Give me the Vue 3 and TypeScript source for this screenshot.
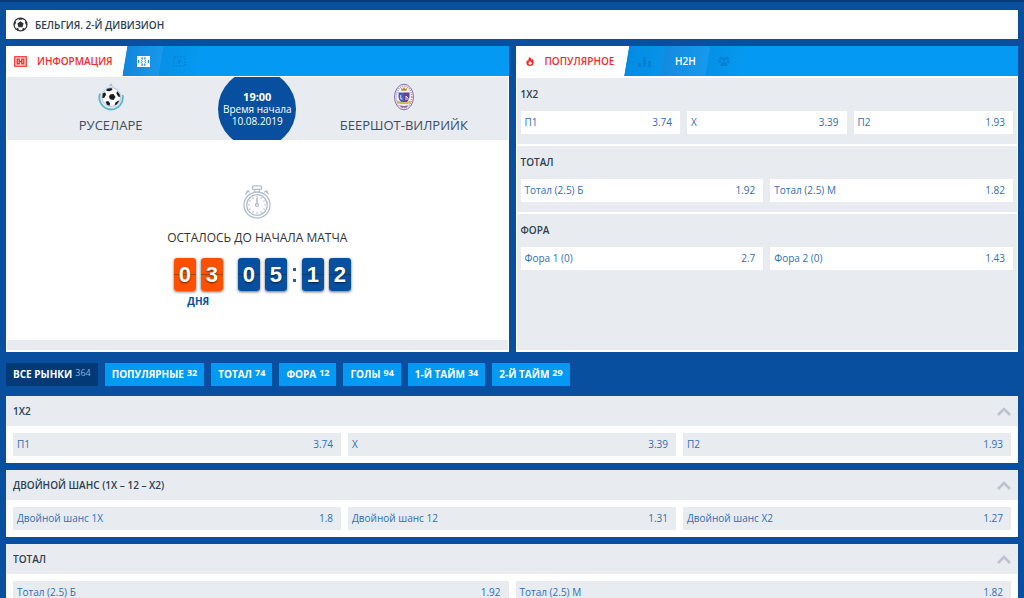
<script setup lang="ts">
import { ref } from 'vue'

interface Outcome {
  name: string
  odds: string
}

interface Market {
  title: string
  outcomes: Outcome[]
}

interface Filter {
  name: string
  count: number
}

const result: Market = {
  title: '1X2',
  outcomes: [
    { name: 'П1', odds: '3.74' },
    { name: 'X', odds: '3.39' },
    { name: 'П2', odds: '1.93' },
  ],
}

const total: Market = {
  title: 'ТОТАЛ',
  outcomes: [
    { name: 'Тотал (2.5) Б', odds: '1.92' },
    { name: 'Тотал (2.5) М', odds: '1.82' },
  ],
}

const handicap: Market = {
  title: 'ФОРА',
  outcomes: [
    { name: 'Фора 1 (0)', odds: '2.7' },
    { name: 'Фора 2 (0)', odds: '1.43' },
  ],
}

const doubleChance: Market = {
  title: 'ДВОЙНОЙ ШАНС (1X – 12 – X2)',
  outcomes: [
    { name: 'Двойной шанс 1X', odds: '1.8' },
    { name: 'Двойной шанс 12', odds: '1.31' },
    { name: 'Двойной шанс X2', odds: '1.27' },
  ],
}

const popular: Market[] = [result, total, handicap]
const markets: Market[] = [result, doubleChance, total]

const filters: Filter[] = [
  { name: 'ВСЕ РЫНКИ', count: 364 },
  { name: 'ПОПУЛЯРНЫЕ', count: 32 },
  { name: 'ТОТАЛ', count: 74 },
  { name: 'ФОРА', count: 12 },
  { name: 'ГОЛЫ', count: 94 },
  { name: '1-Й ТАЙМ', count: 34 },
  { name: '2-Й ТАЙМ', count: 29 },
]

const activeFilter = ref(0)
const closed = ref<Set<number>>(new Set())

function toggle(index: number): void {
  const next = new Set(closed.value)
  if (!next.delete(index)) next.add(index)
  closed.value = next
}

const ticks = Array.from({ length: 12 }, (_, i) => i * 30)
</script>

<template>
  <div class="page">
    <header class="league">
      <svg class="league-ball" viewBox="0 0 16 16" aria-hidden="true">
        <circle cx="8" cy="8" r="6.9" fill="#fff" stroke="#2f2f33" stroke-width="1.3" />
        <path d="M8 4.6l3.300 2.400-1.200 3.900H5.900L4.700 7z" fill="#2f2f33" />
        <path d="M5 1.700Q8 .6 11 1.700L9.500 3H6.500zM1.200 6.200L3.300 4.600 2.800 7.500 1.300 9zM14.800 6.200L12.700 4.600l.5 2.900L14.700 9zM3.600 11.500l2.100.6.700 2.200-2-.5zM12.400 11.500l-2.100.6-.7 2.200 2-.5z" fill="#2f2f33" />
      </svg>
      <h1>БЕЛЬГИЯ. 2-Й ДИВИЗИОН</h1>
    </header>

    <div class="panels">
      <section class="panel">
        <nav class="tabs">
          <button type="button" class="tab tab-active">
            <svg class="icon-field" viewBox="0 0 13 11" aria-hidden="true">
              <rect x=".75" y=".75" width="11.500" height="9.500" fill="#fde3e3" stroke="currentColor" stroke-width="1.200" />
              <path d="M3.200 3.200h2v4.600h-2zM7.800 3.200h2v4.600h-2zM5.500 5.500h2" fill="none" stroke="currentColor" stroke-width="1.300" />
            </svg>
            <span>ИНФОРМАЦИЯ</span>
          </button>
          <button type="button" class="tab tab-second" aria-label="Поле">
            <svg class="icon-field" viewBox="0 0 13 11" aria-hidden="true">
              <rect width="13" height="11" rx=".5" fill="#fff" />
              <path d="M4.500 1.200h1.300v2.300H4.500zM7.200 1.200h1.300v2.300H7.200zM4.500 7.500h1.300v2.300H4.500zM7.200 7.500h1.300v2.300H7.200zM1 4h1.200v3H1zM10.800 4H12v3h-1.200z" fill="#168be0" />
              <path d="M4 4l1.200 1.500L4 7M9 4L7.800 5.500 9 7" fill="none" stroke="#168be0" stroke-width=".9" />
            </svg>
          </button>
          <button type="button" class="tab tab-fade" aria-label="Видео">
            <svg class="icon-field" viewBox="0 0 13 11" aria-hidden="true">
              <rect x="1" y="1" width="11" height="9" fill="none" stroke="currentColor" stroke-dasharray="2 1" />
              <path d="M5 3.300L8.500 5.500 5 7.700z" fill="currentColor" />
            </svg>
          </button>
        </nav>

        <div class="info">
          <div class="teams">
            <div class="team">
              <svg class="crest" viewBox="0 0 28 28" aria-hidden="true">
                <path d="M12.500 2.500L14 0l1.500 2.500 2 2h-7z" fill="#9cc4dd" />
                <circle cx="14" cy="15" r="12" fill="#d9eaf3" />
                <path d="M3 10.500A12 12 0 0 0 14 26.500 12 12 0 0 0 25.600 12" fill="none" stroke="#63b4ce" stroke-width="1.800" />
                <circle cx="14.200" cy="14" r="9.300" fill="#fff" stroke="#8798a3" stroke-width=".5" />
                <path d="M13 11.500l3.500-.5 2 3-2 3-3.500-.7-1-2.500zM10 5.800l4.500-.7 1 1.800-3.500 1.400-2.800-.6zM20 8l2.500 3 .6 3-1.900-.6-1.800-3zM5.700 10.500l2.400-1.200 1 2.500-1.800 3-2 .2zM8.500 18.800l2.600-.8 2 2.300-.6 2.400-2.500-1zM18.500 19.500l3-2 .5.800-2.300 3.100-2.200.8z" fill="#191b20" />
              </svg>
              <h2>РУСЕЛАРЕ</h2>
            </div>
            <div class="kickoff-slot">
              <div class="kickoff">
                <strong>19:00</strong>
                <span>Время начала</span>
                <span>10.08.2019</span>
              </div>
            </div>
            <div class="team">
              <svg class="crest" viewBox="0 0 28 28" aria-hidden="true">
                <ellipse cx="14" cy="14" rx="9.500" ry="12.800" fill="#f6f3f8" stroke="#8a70a4" stroke-width="1" />
                <ellipse cx="14" cy="14" rx="7.800" ry="11" fill="none" stroke="#a994bd" stroke-width="1.500" stroke-dasharray="1 1" />
                <path d="M8.500 9.500H14v11.300C10 19 8.500 16.500 8.500 13z" fill="#3c62b5" />
                <path d="M14 9.500h5.500V13c0 3.500-1.500 6-5.500 7.800z" fill="#62418f" />
                <path d="M10.800 12v4h1.800M16 17v-4l2 2v2" fill="none" stroke="#e6dff0" stroke-width="1" />
                <path d="M11.500 7.800l-.7-2.800 2 1L14 4l1.200 2 2-1-.7 2.800z" fill="#b78b35" />
                <path d="M7 17.500q7 3 14 0v2.300q-7 3-14 0z" fill="#d5b458" />
                <path d="M10 22q4 2 8 0l-1.500 2.500h-5z" fill="#7f68a5" />
              </svg>
              <h2>БЕЕРШОТ-ВИЛРИЙК</h2>
            </div>
          </div>

          <div class="countdown">
            <svg class="stopwatch" viewBox="0 0 30 34" aria-hidden="true">
              <g fill="none" stroke="#b4becd" stroke-width="1.300">
                <rect x="10.500" y=".8" width="9" height="3.600" rx="1" />
                <path d="M12.700 4.500v2.700M17.300 4.500v2.700M5.600 7.200L3.300 9.300M24.400 7.200l2.300 2.100M4 7.500l2-1.800 1.600 1.700M26 7.500l-2-1.800-1.600 1.700" />
                <circle cx="15" cy="20" r="13" />
                <circle cx="15" cy="20" r="10.300" />
                <circle cx="15" cy="20" r="1.500" />
                <path d="M15 18.500V13" stroke-width="1.600" />
              </g>
              <path v-for="angle in ticks" :key="angle" d="M15 11v1.800" :transform="`rotate(${angle} 15 20)`" stroke="#b4becd" stroke-width="1" />
            </svg>
            <p class="countdown-title">ОСТАЛОСЬ ДО НАЧАЛА МАТЧА</p>
            <div class="clock">
              <div class="unit">
                <div class="digits days">
                  <span class="digit">0</span>
                  <span class="digit">3</span>
                </div>
                <span class="unit-label">ДНЯ</span>
              </div>
              <div class="digits">
                <span class="digit">0</span>
                <span class="digit">5</span>
                <span class="colon" aria-hidden="true"></span>
                <span class="digit">1</span>
                <span class="digit">2</span>
              </div>
            </div>
          </div>
          <div class="info-foot"></div>
        </div>
      </section>

      <section class="panel">
        <nav class="tabs">
          <button type="button" class="tab tab-active tab-popular">
            <svg class="icon-fire" viewBox="0 0 10 12" aria-hidden="true">
              <path d="M4.600 2Q6.600 3.200 6.200 4.800q1-.3 1-1.300 1.700 1.800 1.500 4A3.700 3.700 0 0 1 5 11 3.700 3.700 0 0 1 1.300 7.500Q1.300 6 2.300 5q.2 1 .9 1.100Q3 3.800 4.600 2zM5 6q-.3 1-1.300 1.400a1.600 1.600 0 1 0 2.800 0Q5.500 7.200 5 6z" fill="currentColor" fill-rule="evenodd" />
            </svg>
            <span>ПОПУЛЯРНОЕ</span>
          </button>
          <button type="button" class="tab tab-stats" aria-label="Статистика">
            <svg class="icon-field" viewBox="0 0 13 11" aria-hidden="true">
              <path d="M0 7h3v4H0zM5 1h3v10H5zM10 5h3v6h-3z" fill="currentColor" />
            </svg>
          </button>
          <button type="button" class="tab tab-h2h">H2H</button>
          <button type="button" class="tab tab-fade tab-people" aria-label="Составы">
            <svg class="icon-people" viewBox="0 0 12 10" aria-hidden="true">
              <g fill="currentColor">
                <circle cx="6" cy="3.200" r="2" />
                <circle cx="2.500" cy="2" r="1.500" />
                <circle cx="9.500" cy="2" r="1.500" />
                <path d="M2.500 10q0-4 3.500-4t3.500 4zM0 7q0-3 2.500-3l1 1.500L2 7zM12 7q0-3-2.500-3l-1 1.500L10 7z" />
              </g>
            </svg>
          </button>
        </nav>

        <div class="popular">
          <section v-for="market in popular" :key="market.title" class="popular-block">
            <h3>{{ market.title }}</h3>
            <div class="outcomes">
              <button v-for="item in market.outcomes" :key="item.name" type="button" class="outcome">
                <span>{{ item.name }}</span>
                <span>{{ item.odds }}</span>
              </button>
            </div>
          </section>
        </div>
      </section>
    </div>

    <nav class="filters">
      <button
        v-for="(filter, index) in filters"
        :key="filter.name"
        type="button"
        class="filter"
        :class="{ selected: activeFilter === index }"
        @click="activeFilter = index"
      >
        <span>{{ filter.name }}</span>
        <span class="count">{{ filter.count }}</span>
      </button>
    </nav>

    <main class="markets">
      <section v-for="(market, index) in markets" :key="market.title" class="market">
        <button type="button" class="market-head" :aria-expanded="!closed.has(index)" @click="toggle(index)">
          <span>{{ market.title }}</span>
          <svg class="chevron" viewBox="0 0 14 9" aria-hidden="true">
            <path d="M1 8l6-6 6 6" fill="none" stroke="#bcc3cc" stroke-width="2.600" />
          </svg>
        </button>
        <div v-if="!closed.has(index)" class="outcomes market-body">
          <button v-for="item in market.outcomes" :key="item.name" type="button" class="outcome tinted">
            <span>{{ item.name }}</span>
            <span>{{ item.odds }}</span>
          </button>
        </div>
      </section>
    </main>
  </div>
</template>

<style>
body {
  background: #08509f;
}
</style>

<style scoped>
.page {
  box-sizing: border-box;
  height: 100vh;
  overflow: hidden;
  padding: 8px 6px 0;
  border-top: 2px solid #053b78;
  background: #08509f;
  color: #2c3e50;
  font-family: "Open Sans", "Noto Sans", sans-serif;
  font-size: 10px;
  line-height: 14px;
}

h1,
h2,
h3,
p {
  margin: 0;
}

button {
  border: 0;
  border-radius: 0;
  background: none;
  color: inherit;
  font: inherit;
  cursor: pointer;
}

svg {
  display: block;
  flex: none;
}

.league {
  display: flex;
  align-items: center;
  gap: 7px;
  height: 29px;
  padding: 0 7px;
  background: #fff;
}

.league-ball {
  width: 15px;
  height: 15px;
}

.league h1 {
  font-size: 10px;
  font-weight: 600;
}

.panels {
  display: grid;
  grid-template-columns: 1fr 1fr;
  gap: 7px;
  min-height: 306px;
  margin-top: 7px;
}

.panel {
  display: flex;
  flex-direction: column;
  background: #fff;
}

.tabs {
  display: flex;
  height: 30px;
  background: #0499f2;
}

.tab {
  display: flex;
  align-items: center;
  justify-content: center;
  width: 41px;
  margin-left: -5px;
  padding: 0;
  clip-path: polygon(5px 0, 100% 0, calc(100% - 5px) 100%, 0 100%);
  color: #0480d4;
  font-weight: 600;
}

.tab-active {
  justify-content: flex-start;
  gap: 10px;
  width: auto;
  margin-left: 0;
  padding: 0 15px 0 8px;
  background: #fff;
  clip-path: polygon(0 0, 100% 0, calc(100% - 5px) 100%, 0 100%);
  color: #f22b2b;
}

.tab-popular {
  padding-left: 9px;
}

.tab-second {
  background: linear-gradient(100deg, #1284da, #189bef);
}

.tab-fade {
  background: linear-gradient(100deg, #078fe5, #0499f2);
}

.tab-stats {
  background: linear-gradient(100deg, #028ae2, #0794ea);
}

.tab-h2h {
  width: 50px;
  background: linear-gradient(100deg, #1488dd, #169bef);
  color: #fff;
}

.tab-people {
  width: 38px;
}

.icon-field {
  width: 13px;
  height: 11px;
}

.icon-fire {
  width: 10px;
  height: 12px;
}

.icon-people {
  width: 12px;
  height: 10px;
}

.info {
  display: flex;
  flex: 1;
  flex-direction: column;
  padding: 1px 1px 2px;
}

.teams {
  display: grid;
  grid-template-columns: 1fr 78px 1fr;
  gap: 4px;
  height: 63px;
  background: #e8ebf0;
}

.team {
  display: flex;
  flex-direction: column;
  align-items: center;
  padding-top: 6px;
}

.crest {
  width: 28px;
  height: 28px;
}

.team h2 {
  margin-top: 4px;
  color: #3b4d60;
  font-size: 13px;
  font-weight: 400;
  line-height: 20px;
}

.kickoff-slot {
  display: flex;
  align-items: center;
  height: 63px;
  overflow: hidden;
}

.kickoff {
  display: flex;
  flex: none;
  flex-direction: column;
  align-items: center;
  justify-content: center;
  width: 78px;
  height: 78px;
  border-radius: 50%;
  background: #08509f;
  color: #fff;
  font-size: 10px;
  line-height: 12px;
  white-space: nowrap;
}

.kickoff strong {
  font-size: 11px;
  font-weight: 700;
}

.countdown {
  display: flex;
  flex: 1;
  flex-direction: column;
  align-items: center;
  justify-content: center;
  padding-top: 16px;
}

.stopwatch {
  width: 30px;
  height: 34px;
}

.countdown-title {
  margin-top: 9px;
  color: #333;
  font-size: 12px;
  line-height: 20px;
}

.clock {
  display: flex;
  align-items: flex-start;
  gap: 15px;
  margin-top: 10px;
  margin-left: 10px;
}

.unit {
  display: flex;
  flex-direction: column;
  align-items: center;
}

.unit-label {
  color: #08509f;
  font-weight: 700;
  line-height: 20px;
}

.digits {
  display: flex;
  align-items: center;
  gap: 5px;
}

.digit {
  width: 22px;
  height: 33px;
  border-radius: 3px;
  background: linear-gradient(#08509f 16px, #063c78 16px, #063c78 17px, #08509f 17px);
  box-shadow: 0 1px 3px rgba(0, 0, 0, 0.6);
  color: #fff;
  font-family: "Liberation Sans", Arial, sans-serif;
  font-size: 22px;
  font-weight: 700;
  line-height: 33px;
  text-align: center;
  text-shadow: 0 1px 2px rgba(0, 0, 0, 0.6);
}

.days .digit {
  background: linear-gradient(#ff5000 16px, #b93d05 16px, #b93d05 17px, #ff5000 17px);
}

.colon {
  width: 3px;
  height: 8px;
  margin: 0 1px;
  border-top: 3px solid #2463a8;
  border-bottom: 3px solid #2463a8;
}

.info-foot {
  height: 10px;
  background: #e8ebf0;
}

.popular {
  display: flex;
  flex: 1;
  flex-direction: column;
  gap: 2px;
  padding: 2px 1px;
}

.popular-block {
  box-sizing: border-box;
  height: 66px;
  padding: 9px 4px 0;
  background: #e8ebf0;
}

.popular-block:last-child {
  flex: 1;
}

.popular-block h3 {
  margin-bottom: 10px;
  font-size: 10px;
  font-weight: 600;
}

.outcomes {
  display: grid;
  grid-auto-columns: 1fr;
  grid-auto-flow: column;
  gap: 7px;
}

.outcome {
  display: flex;
  align-items: center;
  justify-content: space-between;
  height: 23px;
  padding: 0 8px 2px 4px;
  background: #fff;
  color: #2f6fb5;
  font-size: 10px;
}

.tinted {
  background: #e8ebf0;
}

.filters {
  display: flex;
  flex-wrap: wrap;
  gap: 7px;
  margin-top: 11px;
}

.filter {
  display: flex;
  gap: 3px;
  height: 23px;
  padding: 0 7px;
  background: #0499f2;
  color: #fff;
  font-weight: 700;
  line-height: 23px;
}

.filter.selected {
  background: #033a75;
}

.count {
  font-size: 9px;
  line-height: 19px;
}

.selected .count {
  color: #8fb0d6;
  font-weight: 400;
}

.markets {
  display: flex;
  flex-direction: column;
  gap: 7px;
  margin-top: 10px;
}

.market {
  background: #fff;
}

.market-head {
  display: flex;
  align-items: center;
  justify-content: space-between;
  width: 100%;
  height: 30px;
  padding: 0 7px;
  background: #e8ebf0;
  font-weight: 600;
}

.chevron {
  width: 14px;
  height: 9px;
}

.market-body {
  padding: 7px;
}
</style>
